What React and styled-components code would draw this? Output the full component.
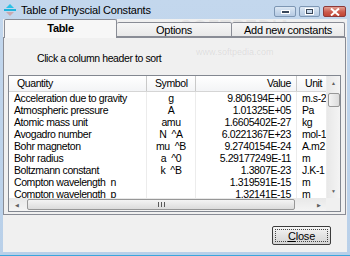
import React from 'react'
import styled, { createGlobalStyle } from 'styled-components'

const GlobalStyle = createGlobalStyle`
  html, body { margin: 0; padding: 0; background: #f0f0f0; }
  body {
    font-family: "Liberation Sans", Arial, sans-serif;
    font-size: 10.5px;
    color: #000;
  }
  * { box-sizing: border-box; }
`

const rows = [
  ['Acceleration due to gravity', 'g', '9.806194E+00', 'm.s-2'],
  ['Atmospheric pressure', 'A', '1.01325E+05', 'Pa'],
  ['Atomic mass unit', 'amu', '1.6605402E-27', 'kg'],
  ['Avogadro number', 'N  ^A', '6.0221367E+23', 'mol-1'],
  ['Bohr magneton', 'mu  ^B', '9.2740154E-24', 'A.m2'],
  ['Bohr radius', 'a  ^0', '5.29177249E-11', 'm'],
  ['Boltzmann constant', 'k  ^B', '1.3807E-23', 'J.K-1'],
  ['Compton wavelength  n', '', '1.319591E-15', 'm'],
  ['Compton wavelength  p', '', '1.32141E-15', 'm'],
]

const cols = [
  { key: 'q', label: 'Quantity', width: 138, align: 'left' },
  { key: 's', label: 'Symbol', width: 49, align: 'center' },
  { key: 'v', label: 'Value', width: 101, align: 'right' },
  { key: 'u', label: 'Unit', width: 40, align: 'left' },
]

const Window = styled.div`
  position: relative;
  width: 350px;
  height: 256px;
  display: flex;
  flex-direction: column;
  background: linear-gradient(#c3d7ed, #b9d0e9);
  padding: 0 3px 3px 3px;
  border-bottom: 1px solid #3aa6dc;
`

const TitleBar = styled.div`
  height: 19px;
  display: flex;
  align-items: center;
  padding-left: 1px;
`

const Title = styled.span`
  margin-left: 5px;
  font-size: 11px;
  color: #000;
  flex: 1;
  letter-spacing: -0.2px;
`

const Caption = styled.div`
  display: flex;
  gap: 3px;
  align-self: flex-start;
  margin-top: 6px;
  margin-right: 1px;
`

const CapButton = styled.div`
  width: ${p => p.$w}px;
  height: 11px;
  border: 1px solid ${p => (p.$close ? '#8d3a3a' : '#7d96b3')};
  border-radius: 2px;
  background: ${p =>
    p.$close
      ? 'linear-gradient(#e2a195, #cc5a4c 55%, #c24635)'
      : 'linear-gradient(#dde8f4, #c5d6ea 55%, #b6cae2)'};
  display: flex;
  align-items: center;
  justify-content: center;
`

const Client = styled.div`
  flex: 1;
  background: #f0f0f0;
  display: flex;
  flex-direction: column;
`

const TabStrip = styled.div`
  height: 18px;
  display: flex;
  align-items: flex-end;
  padding-left: 1px;
  position: relative;
  z-index: 1;
`

const Tab = styled.div`
  width: ${p => p.$w}px;
  height: ${p => (p.$active ? 19 : 15)}px;
  margin-bottom: ${p => (p.$active ? -1 : 0)}px;
  border: 1px solid #898c95;
  border-bottom: ${p => (p.$active ? 'none' : '1px solid #898c95')};
  border-left: ${p => (p.$first || p.$active ? '1px solid #898c95' : 'none')};
  border-radius: 2px 2px 0 0;
  background: ${p => (p.$active ? '#f7f7f7' : 'linear-gradient(#f6f6f6, #e9e9e9)')};
  font-weight: ${p => (p.$active ? 'bold' : 'normal')};
  font-size: 11px;
  display: flex;
  align-items: center;
  justify-content: center;
  padding-bottom: ${p => (p.$active ? 2 : 0)}px;
  letter-spacing: -0.3px;
`

const Panel = styled.div`
  height: 178px;
  margin-right: 1px;
  border: 1px solid #898c95;
  background: #f0f0f0;
  padding: 0 4px;
  display: flex;
  flex-direction: column;
`

const Hint = styled.div`
  margin: 14px 0 0 29px;
  height: 12px;
  line-height: 12px;
  letter-spacing: -0.4px;
`

const ListBox = styled.div`
  margin-top: 11px;
  height: 137px;
  border: 1px solid #828790;
  background: #fff;
  display: grid;
  grid-template-columns: 1fr 14px;
  grid-template-rows: 1fr 13px;
  overflow: hidden;
`

const Grid = styled.div`
  overflow: hidden;
`

const HeaderRow = styled.div`
  display: flex;
  height: 16px;
  border-bottom: 1px solid #d5d5d5;
  background: linear-gradient(#ffffff, #f3f4f6);
`

const HeadCell = styled.div`
  flex: 0 0 ${p => p.$w}px;
  border-right: 1px solid #c9c9c9;
  line-height: 15px;
  text-align: ${p => p.$align};
  padding: 0 ${p => (p.$align === 'right' ? 5 : 8)}px;
  white-space: nowrap;
  overflow: hidden;
  letter-spacing: -0.4px;
`

const Row = styled.div`
  display: flex;
  height: 12px;
`

const Cell = styled.div`
  flex: 0 0 ${p => p.$w}px;
  border-right: 1px solid #ececec;
  line-height: 12px;
  text-align: ${p => p.$align};
  padding: 0 5px;
  white-space: pre;
  overflow: hidden;
  letter-spacing: -0.4px;
`

const VScroll = styled.div`
  background: linear-gradient(90deg, #e8e8e8, #f4f4f4);
  border-left: 1px solid #ededed;
  display: flex;
  flex-direction: column;
  align-items: center;
`

const HScroll = styled.div`
  background: linear-gradient(#e8e8e8, #f4f4f4);
  display: flex;
  align-items: center;
`

const Arrow = styled.div`
  flex: 0 0 ${p => p.$len}px;
  display: flex;
  align-items: center;
  justify-content: center;
  color: #606060;
  font-size: 5px;
  width: 100%;
  height: 100%;
`

const HThumb = styled.div`
  flex: 0 0 268px;
  height: 11px;
  margin-left: 3px;
  border: 1px solid #979797;
  border-radius: 2px;
  background: linear-gradient(#f4f4f4, #dcdcdc);
  display: flex;
  align-items: center;
  justify-content: center;
`

const VThumb = styled.div`
  width: 12px;
  height: 14px;
  margin-top: 3px;
  border: 1px solid #979797;
  border-radius: 2px;
  background: linear-gradient(90deg, #f4f4f4, #dcdcdc);
`

const Spacer = styled.div`
  flex: 1;
`

const Corner = styled.div`
  background: #f0f0f0;
`

const Footer = styled.div`
  display: flex;
  justify-content: flex-end;
  padding: 11px 16px 0 0;
`

const Button = styled.button`
  width: 59px;
  height: 19px;
  padding: 2px;
  border: 1px solid #3c3c3c;
  border-radius: 2px;
  background: linear-gradient(#f6f6f6, #e3e3e3 50%, #d5d5d5);
  font-family: "Liberation Sans", Arial, sans-serif;
  font-size: 11px;
  color: #000;
`

const Focus = styled.span`
  display: flex;
  align-items: center;
  justify-content: center;
  width: 100%;
  height: 100%;
  border: 1px dotted #444;
  letter-spacing: -0.2px;
`

const Watermark = styled.div`
  position: absolute;
  left: ${p => p.$x}px;
  top: ${p => p.$y}px;
  color: rgba(120, 120, 120, ${p => p.$a});
  font-size: ${p => p.$size}px;
  font-weight: ${p => p.$weight};
  letter-spacing: ${p => p.$ls}px;
  pointer-events: none;
  white-space: nowrap;
`

const AppIcon = () => (
  <svg width="12" height="12" viewBox="0 0 12 12">
    <polygon points="6,0 10,4 2,4" fill="#2bc1e6" />
    <rect x="0" y="5" width="12" height="2" fill="#1fb3dc" />
    <polygon points="2,8 10,8 6,12" fill="#c9a9b0" />
  </svg>
)

const Grip = () => (
  <svg width="7" height="5" viewBox="0 0 7 5">
    <rect x="0" y="0" width="1" height="5" fill="#5a5a5a" />
    <rect x="3" y="0" width="1" height="5" fill="#5a5a5a" />
    <rect x="6" y="0" width="1" height="5" fill="#5a5a5a" />
  </svg>
)

export default function App() {
  return (
    <>
      <GlobalStyle />
      <Window>
        <TitleBar>
          <AppIcon />
          <Title>Table of Physcial Constants</Title>
          <Caption>
            <CapButton $w={22}>
              <svg width="9" height="4" viewBox="0 0 9 4">
                <rect x="0.5" y="0.5" width="8" height="3" fill="#39475a" stroke="#fff" />
              </svg>
            </CapButton>
            <CapButton $w={21}>
              <svg width="9" height="7" viewBox="0 0 9 7">
                <rect x="0.5" y="0.5" width="8" height="6" fill="none" stroke="#fff" />
                <rect x="1.5" y="1.5" width="6" height="4" fill="none" stroke="#39475a" />
              </svg>
            </CapButton>
            <CapButton $w={23} $close>
              <svg width="10" height="8" viewBox="0 0 10 8">
                <path d="M1 0.5 L9 7.5 M9 0.5 L1 7.5" stroke="#fff" strokeWidth="2" />
              </svg>
            </CapButton>
          </Caption>
        </TitleBar>
        <Client>
          <TabStrip>
            <Tab $w={113} $active $first>Table</Tab>
            <Tab $w={115}>Options</Tab>
            <Tab $w={113}>Add new constants</Tab>
          </TabStrip>
          <Panel>
            <Hint>Click a column header to sort</Hint>
            <ListBox>
              <Grid>
                <HeaderRow>
                  {cols.map(c => (
                    <HeadCell key={c.key} $w={c.width} $align={c.align}>{c.label}</HeadCell>
                  ))}
                </HeaderRow>
                {rows.map(r => (
                  <Row key={r[0]}>
                    {cols.map((c, i) => (
                      <Cell key={c.key} $w={c.width} $align={c.align}>{r[i]}</Cell>
                    ))}
                  </Row>
                ))}
              </Grid>
              <VScroll>
                <Arrow $len={14}>▲</Arrow>
                <VThumb />
                <Spacer />
                <Arrow $len={14}>▼</Arrow>
              </VScroll>
              <HScroll>
                <Arrow $len={15}>◀</Arrow>
                <HThumb><Grip /></HThumb>
                <Spacer />
                <Arrow $len={15}>▶</Arrow>
              </HScroll>
              <Corner />
            </ListBox>
          </Panel>
          <Footer>
            <Button><Focus><u>C</u>lose</Focus></Button>
          </Footer>
        </Client>
        <Watermark $x={180} $y={17} $size={18} $weight="bold" $ls={1} $a={0.1}>SOFTPEDIA</Watermark>
        <Watermark $x={196} $y={47} $size={9} $weight="normal" $ls={0} $a={0.16}>www.softpedia.com</Watermark>
      </Window>
    </>
  )
}
